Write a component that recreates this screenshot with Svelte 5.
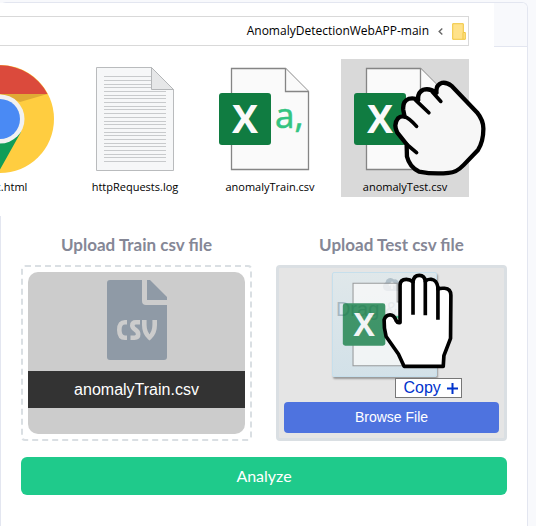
<script>
  const files = [
    { name: 'index.html', kind: 'chrome' },
    { name: 'httpRequests.log', kind: 'log' },
    { name: 'anomalyTrain.csv', kind: 'csv' },
    { name: 'anomalyTest.csv', kind: 'csv', selected: true }
  ];
  const logLines = [10, 14, 18, 21, 25, 29, 32, 36, 40, 43, 47, 51, 55, 58, 62, 66, 69, 73, 77, 80, 84, 88, 91, 95];
</script>

{#snippet excel()}
  <svg class="excel" viewBox="0 0 104 104" aria-hidden="true">
    <path d="M13.5 1.5H67.5L90.5 24.5V102.5H13.5Z" fill="#fafafa" stroke="#858585" stroke-width="1.3" />
    <path d="M67.5 1.5V24.5H90.5" fill="#fafafa" stroke="#858585" stroke-width="1.3" />
    <rect x="1" y="26" width="52" height="52" rx="3" fill="#107c41" />
    <text x="27" y="66" text-anchor="middle" class="x">X</text>
    <text x="57" y="61" class="a">a,</text>
  </svg>
{/snippet}

<main class="page">
  <section class="card">
    <header class="card-head"></header>
    <div class="card-body">
      <div class="uploads">
        <div class="upload">
          <h2>Upload Train csv file</h2>
          <div class="zone done">
            <div class="preview">
              <svg class="csv" viewBox="0 0 60 80" aria-hidden="true">
                <path d="M3 0H35V21Q35 25 39 25H60V77Q60 80 57 80H3Q0 80 0 77V3Q0 0 3 0Z" fill="#8f9aa6" />
                <path d="M40 0H43L60 17V20H40Z" fill="#8f9aa6" />
                <g fill="none" stroke="#ccc" stroke-width="4.6">
                  <path d="M20 42.3H18Q12.300 42.300 12.300 50Q12.300 57.700 18 57.700H20" />
                  <path d="M33 42.300H29Q25.300 42.300 25.300 45.500Q25.300 47.500 28 49.500Q31.200 51.500 31.200 54.300Q31.200 57.700 27.500 57.700H23.500" />
                  <path d="M37.300 40V45Q37.300 53 42.500 57.500Q47.700 53 47.700 45V40" />
                </g>
              </svg>
              <p class="picked">anomalyTrain.csv</p>
            </div>
          </div>
        </div>

        <div class="upload">
          <h2>Upload Test csv file</h2>
          <div class="zone over">
            <svg class="cloud" viewBox="0 0 20 14" aria-hidden="true">
              <path d="M5 14A4.500 4.500 0 0 1 3.500 5.500A5 5 0 0 1 12 2.500A3.500 3.500 0 0 1 16.500 6A4 4 0 0 1 16 14Z" fill="#5f7183" />
              <path d="M10 12V6M7 8.500L10 5.500L13 8.500" fill="none" stroke="#e5e5e5" stroke-width="1.800" />
            </svg>
            <p class="hint">Drag &amp; Drop</p>
            <button class="browse" type="button">Browse File</button>

            <div class="ghost">{@render excel()}</div>
            <svg class="hand open" viewBox="180 36 225 295" aria-hidden="true">
              <path d="M240 188V76Q240 58 259 58Q270 58 279 66Q281 46 298 46Q314 46 316 64Q322 57 334 58Q350 60 354 82V88Q360 84 374 85Q393 87 393 106L392 236L372 288L370 320H252L235 283L198 230Q191 205 192 180Q197 165 210 165Q222 165 228 182Q233 191 240 188Z" />
              <path d="M279 66V165M316 62V166M354 80V180" />
            </svg>
            <div class="copy">Copy<svg viewBox="0 0 11 11" aria-hidden="true"><path d="M5.500 0V11M0 5.500H11" stroke="#03c" stroke-width="2" /></svg></div>
          </div>
        </div>
      </div>
      <button class="analyze" type="button">Analyze</button>
    </div>
  </section>

  <section class="explorer" aria-label="File explorer">
    <div class="path">
      <span>AnomalyDetectionWebAPP-main</span>
      <svg class="chev" viewBox="0 0 5 7" aria-hidden="true"><path d="M4.300 .6L1.200 3.500L4.300 6.400" fill="none" stroke="#666" stroke-width="1.400" /></svg>
      <svg class="folder" viewBox="0 0 14 17" aria-hidden="true">
        <path d="M.7 .7H11.300V9.500H13.300V16.300H.7Z" fill="#ffe28a" stroke="#f0c53c" stroke-width="1" />
        <path d="M11 9.500V16" stroke="#f0c53c" />
      </svg>
    </div>
    <div class="files">
      {#each files as file}
        <div class="file" class:selected={file.selected}>
          <div class="icon">
            {#if file.kind === 'chrome'}
              <svg class="chrome" viewBox="-54 -54 108 108" aria-hidden="true">
                <circle r="54" fill="#ffcd40" />
                <path d="M-46.800 -27A54 54 0 0 1 47.500 -25H0L-21 12Z" fill="#db4a3c" />
                <path d="M-46.800 -27A54 54 0 0 0 -2 54L21 13L-21 13Z" fill="#109d58" />
                <path d="M0 -25H47.500L20 -17Z" fill="#e0ab35" />
                <circle r="24.500" fill="#f1f1f1" />
                <circle r="20" fill="#4a8af4" />
              </svg>
            {:else if file.kind === 'log'}
              <svg class="log" viewBox="0 0 78 104" aria-hidden="true">
                <path d="M.5 .5H55.500L77.500 22.500V103.500H.5Z" fill="#f6f7f8" stroke="#b9bbbd" />
                {#each logLines as y}
                  <path d="M8 {y - .5}H{y < 23 ? 55 : 70}" stroke="#c8cacc" />
                {/each}
                <path d="M55.500 .5V22.500H77.500Z" fill="#e6e7e8" stroke="#b4b6b8" />
              </svg>
            {:else}
              {@render excel()}
            {/if}
          </div>
          <span class="name">{file.name}</span>
          {#if file.selected}
            <svg class="hand fist" viewBox="172 90 280 288" aria-hidden="true">
              <path d="M213 283L185 248Q172 223 187 205Q195 197 207 200L203 180Q200 153 220 146Q235 142 248 150Q245 128 263 119Q282 113 303 128Q300 105 320 98Q335 96 348 107L425 187Q445 212 444 238Q444 275 428 300L385 345Q362 369 340 369Q295 374 250 365Q222 352 214 320Z" />
              <path d="M213 283L243 308M207 200Q220 203 243 229M240 150L280 188M290 125L316 154" />
            </svg>
          {/if}
        </div>
      {/each}
    </div>
  </section>
</main>

<style>
  :global(body) { margin: 0; background: #f8f9fc; }
  .page {
    position: relative;
    box-sizing: border-box;
    min-height: 100vh;
    padding: 2px 8px 0 0;
    display: flex;
    overflow: hidden;
    font-family: Lato, sans-serif;
  }
  .card {
    flex: 1;
    border: 1px solid #e3e6f0;
    border-bottom: 0;
    border-radius: 6px 6px 0 0;
    background: #fff;
  }
  .card-head {
    height: 43px;
    border-bottom: 1px solid #e3e6f0;
    border-radius: 5px 5px 0 0;
    background: #f8f9fc;
  }
  .card-body { padding: 186px 20px 20px; }
  .uploads { display: flex; gap: 24px; }
  .upload { flex: 1; min-width: 0; }
  h2 {
    margin: 0 0 8px;
    font-size: 17px;
    line-height: 24px;
    font-weight: 700;
    color: #858796;
    text-align: center;
  }
  .zone {
    position: relative;
    box-sizing: border-box;
    height: 176px;
    padding: 5px;
    border: 2px dashed #dadfe3;
    border-radius: 4px;
    display: flex;
    flex-direction: column;
  }
  .zone.over { border: 3px solid #dadfe3; background: #e5e5e5; align-items: center; }
  .preview {
    flex: 1;
    border-radius: 10px;
    background: #ccc;
    display: flex;
    flex-direction: column;
    align-items: center;
    padding-top: 8px;
    gap: 11px;
  }
  .csv { width: 60px; height: 80px; }
  .picked {
    align-self: stretch;
    margin: 0;
    background: #333;
    color: #fff;
    font: 16px/37px "Liberation Sans", sans-serif;
    text-align: center;
  }
  .cloud { width: 20px; height: 14px; margin-top: 4px; }
  .hint { margin: 6px 0 0; font: 20px/24px "Liberation Sans", sans-serif; color: #4a5c6e; }
  button { border: 0; padding: 0; color: #fff; cursor: pointer; }
  .browse {
    width: 100%;
    margin-top: auto;
    border-radius: 4px;
    background: #4e73df;
    font: 14px/31px "Liberation Sans", sans-serif;
  }
  .analyze {
    width: 100%;
    margin-top: 16px;
    border-radius: 6px;
    background: #1fca8b;
    font: 16px/38px Lato, sans-serif;
  }
  .ghost {
    position: absolute;
    left: calc(50% - 60px);
    top: 4px;
    box-sizing: border-box;
    width: 105px;
    height: 105px;
    padding: 9px;
    border: 1px solid #c6dfec;
    border-radius: 2px;
    background: linear-gradient(#dde9eda8, #c9dfeaa8);
    box-shadow: 1px 2px 2px #0005;
  }
  .ghost .excel { width: 85px; height: 85px; opacity: .76; }
  .hand { position: absolute; }
  .hand path { fill: #fff; stroke: #000; stroke-width: 11; stroke-linejoin: round; }
  .hand path + path { fill: none; stroke-linecap: butt; }
  .open { left: calc(50% - 12px); top: 4px; width: 75px; height: 98px; }
  .fist { left: 52px; top: 21px; width: 93px; height: 96px; }
  .fist path { fill: #f7f7f7; stroke-width: 13; }
  .fist path + path { stroke-linecap: round; stroke-width: 11; }
  .copy {
    position: absolute;
    left: calc(50% + 3px);
    top: 110px;
    box-sizing: border-box;
    width: 67px;
    height: 20px;
    padding: 0 3px 0 8px;
    border: 1px solid #777;
    background: #fff;
    color: #03c;
    font: 16px/18px "Liberation Sans", sans-serif;
    display: flex;
    align-items: center;
    justify-content: space-between;
  }
  .copy svg { width: 11px; height: 11px; }

  .explorer {
    position: absolute;
    top: 3px;
    left: 0;
    right: 42px;
    padding: 13px 25px 19px 0;
    background: #fff;
    overflow: hidden;
    font: 12px/16px "Open Sans", sans-serif;
    color: #000;
  }
  .path {
    box-sizing: border-box;
    height: 30px;
    padding-right: 2px;
    border: 1px solid #d9d9d9;
    border-left: 0;
    display: flex;
    align-items: center;
    justify-content: flex-end;
    gap: 9px;
  }
  .chev { width: 5px; height: 7px; }
  .folder { width: 14px; height: 17px; }
  .files { margin-top: 13px; display: flex; justify-content: flex-end; gap: 7px; }
  .file {
    position: relative;
    flex: none;
    width: 128px;
    padding-bottom: 2px;
    display: flex;
    flex-direction: column;
    align-items: center;
  }
  .selected { background: #d9d9d9; }
  .icon { height: 120px; display: flex; align-items: center; }
  .chrome { width: 108px; height: 108px; }
  .log { width: 78px; height: 104px; }
  .excel { display: block; width: 104px; height: 104px; }
  .excel text { font-family: "Open Sans", sans-serif; }
  .x { font-size: 39px; font-weight: 700; fill: #fafafa; }
  .a { font-size: 35px; fill: #33c481; stroke: #33c481; stroke-width: .6; }
  .name { font-size: 11px; white-space: nowrap; }
</style>
